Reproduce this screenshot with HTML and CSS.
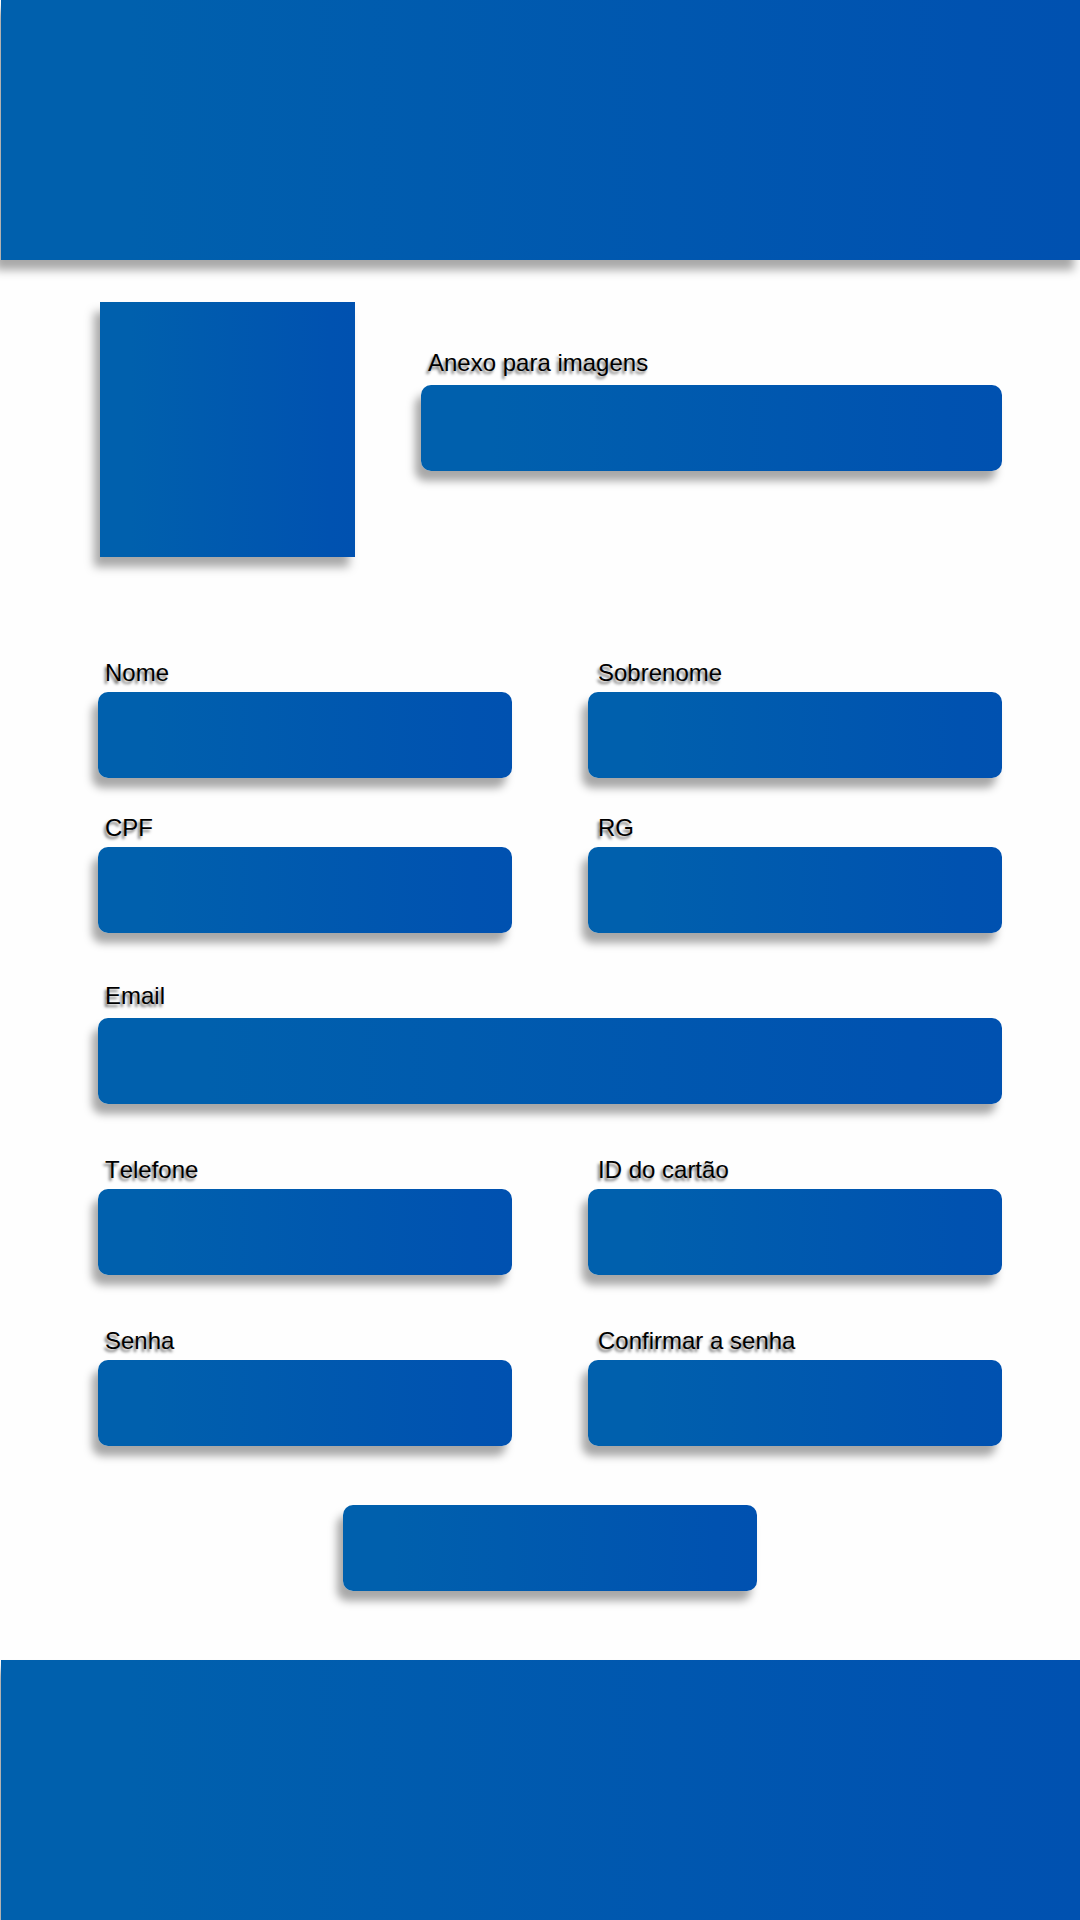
FILE: index.html
```html
<!DOCTYPE html>
<html lang="pt-BR">
<head>
  <meta charset="utf-8">
  <meta name="viewport" content="width=device-width, initial-scale=1">
  <title>Cadastro</title>
  <link rel="stylesheet" href="styles.css">
</head>
<body>
  <header class="band"></header>
  <main>
    <form class="form">
      <div class="upload">
        <div class="avatar" role="img" aria-label="Foto"></div>
        <div class="field field-spaced">
          <label for="anexo">Anexo para imagens</label>
          <input id="anexo" type="file" accept="image/*">
        </div>
      </div>
      <div class="row">
        <div class="field">
          <label for="nome">Nome</label>
          <input id="nome" type="text">
        </div>
        <div class="field">
          <label for="sobrenome">Sobrenome</label>
          <input id="sobrenome" type="text">
        </div>
      </div>
      <div class="row row-close">
        <div class="field">
          <label for="cpf">CPF</label>
          <input id="cpf" type="text">
        </div>
        <div class="field">
          <label for="rg">RG</label>
          <input id="rg" type="text">
        </div>
      </div>
      <div class="row row-single">
        <div class="field field-spaced">
          <label for="email">Email</label>
          <input id="email" type="email">
        </div>
      </div>
      <div class="row">
        <div class="field">
          <label for="telefone">Telefone</label>
          <input id="telefone" type="tel">
        </div>
        <div class="field">
          <label for="cartao">ID do cartão</label>
          <input id="cartao" type="text">
        </div>
      </div>
      <div class="row">
        <div class="field">
          <label for="senha">Senha</label>
          <input id="senha" type="password">
        </div>
        <div class="field">
          <label for="confirmar">Confirmar a senha</label>
          <input id="confirmar" type="password">
        </div>
      </div>
      <button class="submit" type="submit" aria-label="Enviar"></button>
    </form>
  </main>
  <footer class="band"></footer>
</body>
</html>
```
FILE: styles.css
```css
:root {
  --blue: linear-gradient(90deg, #0060ad 0%, #0060ad 12%, #0052b0 90%, #0051b0 100%);
  --shadow: -6px 10px 9px rgba(0, 0, 0, 0.34);
}

* {
  box-sizing: border-box;
}

body {
  margin: 0;
  background: #fefefe;
  color: #000;
  font: 24px/28px "Liberation Sans", Arial, sans-serif;
  font-kerning: none;
}

.band {
  height: 260px;
  margin-left: 1px;
  background: var(--blue);
  box-shadow: var(--shadow);
}

.form {
  padding: 42px 78px 69px 98px;
}

.upload {
  display: flex;
  gap: 66px;
  padding-left: 2px;
  margin-bottom: 102px;
}

.upload .field {
  flex: 1;
  padding-top: 47px;
}

.avatar {
  width: 255px;
  height: 255px;
  background: var(--blue);
  box-shadow: var(--shadow);
}

.row {
  display: grid;
  grid-template-columns: 1fr 1fr;
  gap: 76px;
  margin-top: 52px;
}

.row-close {
  margin-top: 36px;
}

.row-single {
  grid-template-columns: 1fr;
  margin-top: 49px;
}

.field {
  display: flex;
  flex-direction: column;
  gap: 5px;
  min-width: 0;
}

.field-spaced {
  gap: 8px;
}

.field label {
  padding-left: 7px;
  text-shadow: -2px 3px 3px rgba(0, 0, 0, 0.55);
}

.row .field + .field label {
  padding-left: 10px;
}

.field input,
.submit {
  height: 86px;
  border: 0;
  border-radius: 10px;
  background: var(--blue);
  box-shadow: var(--shadow);
  color: #fff;
  font: inherit;
}

.field input {
  width: 100%;
  padding: 0 20px;
}

.field input[type="file"] {
  color: transparent;
  font-size: 0;
}

.field input::file-selector-button {
  display: none;
}

.submit {
  display: block;
  width: 414px;
  max-width: 100%;
  margin: 59px auto 0;
}
```
